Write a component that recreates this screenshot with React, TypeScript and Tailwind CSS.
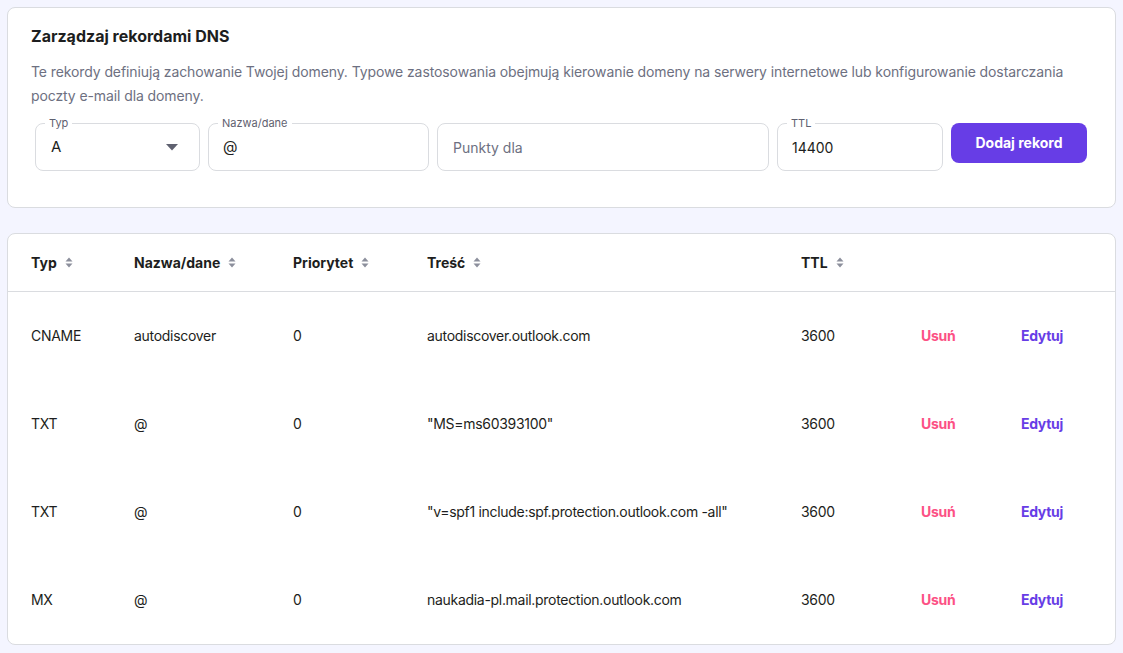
import { ReactNode } from "react";

interface DnsRecord {
  type: string;
  name: string;
  priority: string;
  content: string;
  ttl: string;
}

const records: DnsRecord[] = [
  { type: "CNAME", name: "autodiscover", priority: "0", content: "autodiscover.outlook.com", ttl: "3600" },
  { type: "TXT", name: "@", priority: "0", content: "\"MS=ms60393100\"", ttl: "3600" },
  { type: "TXT", name: "@", priority: "0", content: "\"v=spf1 include:spf.protection.outlook.com -all\"", ttl: "3600" },
  { type: "MX", name: "@", priority: "0", content: "naukadia-pl.mail.protection.outlook.com", ttl: "3600" },
];

const gridCols = "grid grid-cols-[103px_159px_134px_374px_120px_100px_1fr] pl-[23px]";

function SortIcon() {
  return (
    <svg width="8" height="11" viewBox="0 0 8 11" className="ml-2 text-[#8c8f9c]">
      <path d="M4 0.5 L7.5 4.5 H0.5 Z" fill="currentColor" />
      <path d="M4 10.5 L7.5 6.5 H0.5 Z" fill="currentColor" />
    </svg>
  );
}

function Field({ label, children, className }: { label?: string; children: ReactNode; className: string }) {
  return (
    <div className={`relative h-12 shrink-0 rounded-lg border border-[#dadce0] bg-white flex items-center ${className}`}>
      {label && (
        <span className="absolute -top-[8px] left-[9px] bg-white px-[4px] text-[11px] leading-[14px] text-[#5f6170]">
          {label}
        </span>
      )}
      {children}
    </div>
  );
}

export default function App() {
  return (
    <div className="min-h-[653px] bg-[#f4f5ff] pt-[7px] pb-2 font-['Inter',sans-serif] text-[#1d1e20]">
      {/* Add record card */}
      <div className="mx-[7px] w-[1109px] rounded-lg border border-[#dadce0] bg-white px-[23px] pt-4 pb-[36px]">
        <h1 className="text-base leading-6 font-bold text-[#1d1e20]">Zarządzaj rekordami DNS</h1>
        <p className="mt-3 text-sm leading-6 tracking-[-0.1px] text-[#6d7081]">
          Te rekordy definiują zachowanie Twojej domeny. Typowe zastosowania obejmują kierowanie domeny na serwery internetowe lub konfigurowanie dostarczania poczty e-mail dla domeny.
        </p>
        <div className="mt-[15px] ml-1 flex gap-2">
          <Field label="Typ" className="w-[165px] justify-between pl-[15px] pr-[21px]">
            <span className="text-[15px]">A</span>
            <svg width="12" height="7" viewBox="0 0 12 7">
              <path d="M0 0 H12 L6 6.5 Z" fill="#5f6170" />
            </svg>
          </Field>
          <Field label="Nazwa/dane" className="w-[221px] px-[14px]">
            <span className="text-[15px]">@</span>
          </Field>
          <Field className="w-[332px] px-[15px]">
            <span className="text-[14px] text-[#6d7081]">Punkty dla</span>
          </Field>
          <Field label="TTL" className="w-[166px] px-[14px]">
            <span className="text-[14px]">14400</span>
          </Field>
          <button className="h-10 w-[136px] rounded-lg bg-[#673de6] text-sm font-bold text-white">
            Dodaj rekord
          </button>
        </div>
      </div>

      {/* Records table */}
      <div className="mx-[7px] mt-[25px] w-[1109px] rounded-lg border border-[#dadce0] bg-white">
        <div className={`${gridCols} h-[58px] items-center border-b border-[#dadce0] text-sm font-bold`}>
          {["Typ", "Nazwa/dane", "Priorytet", "Treść", "TTL"].map((col) => (
            <div key={col} className="flex items-center">
              {col}
              <SortIcon />
            </div>
          ))}
          <div />
          <div />
        </div>
        {records.map((r, i) => (
          <div key={i} className={`${gridCols} h-[88px] items-center text-sm tracking-[-0.3px]`}>
            <div>{r.type}</div>
            <div>{r.name}</div>
            <div>{r.priority}</div>
            <div>{r.content}</div>
            <div>{r.ttl}</div>
            <div className="font-bold text-[#fc5185]">Usuń</div>
            <div className="font-bold text-[#673de6]">Edytuj</div>
          </div>
        ))}
      </div>
    </div>
  );
}
